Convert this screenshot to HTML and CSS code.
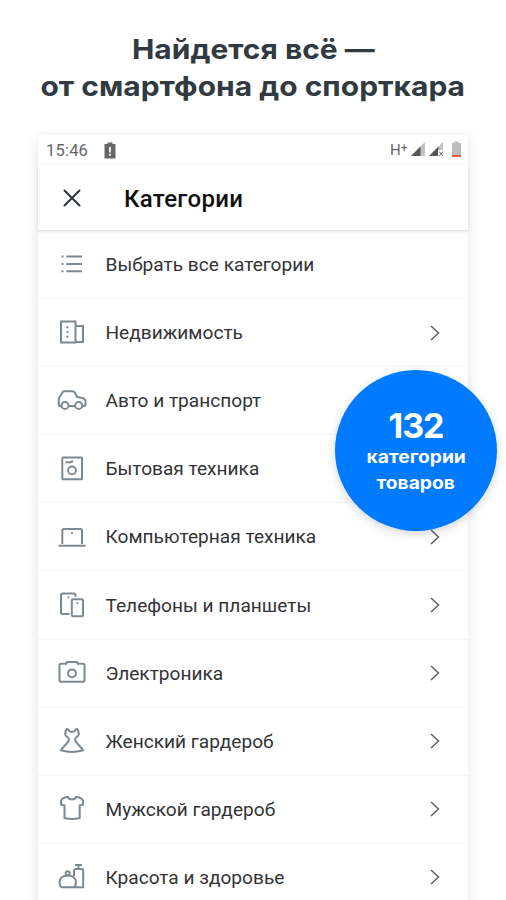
FILE: index.html
```html
<!DOCTYPE html>
<html lang="ru">
<head>
<meta charset="utf-8">
<title>Категории</title>
<link rel="stylesheet" href="styles.css">
</head>
<body>
<h1 class="headline"><span class="line">Найдется всё —</span><span class="line">от смартфона до спорткара</span></h1>
<main class="phone">
  <div class="status">
    <span class="time">15:46</span>
    <svg class="alert" width="12" height="17" viewBox="0 0 12 17"><path d="M.5 2H3.5V.5H8.500V2H11.500V16.500H.5z" fill="#666"/><path d="M6 5v5.500M6 11.700v2" stroke="#fff" stroke-width="1.700"/></svg>
    <span class="net">H<sup>+</sup></span>
    <svg class="signals" width="72" height="18" viewBox="0 0 72 18">
      <path d="M14 1V15H0z" fill="#c2c2c2"/><path d="M9.500 5.500V15H0z" fill="#555"/>
      <path d="M32 1V9H27V15H18z" fill="#c2c2c2"/><path d="M27.500 5.500V15H18z" fill="#555"/><path d="M27 9h6v7h-6z" fill="#fff"/><path d="M28 10.500l4 4.500M32 10.500l-4 4.500" stroke="#666" stroke-width="1"/>
      <path d="M41 2h2.500V.5h4V2H50v14h-9z" fill="#bdbdbd"/><path d="M41 14h9v2h-9z" fill="#ee5b45"/>
    </svg>
  </div>
  <header class="bar">
    <svg class="close" width="18" height="18" viewBox="0 0 18 18"><path d="M1.500 1.500l15 15M16.500 1.500l-15 15"/></svg>
    <h2>Категории</h2>
  </header>
  <ul class="list">
    <li><svg class="icon" viewBox="0 0 36 36"><path d="M12.300 9.500H28M12.300 17H28M12.300 24.300H28M7.500 9.500h2M7.500 17h2M7.500 24.300h2"/></svg><span>Выбрать все категории</span></li>
    <li><svg class="icon" viewBox="0 0 36 36"><path d="M7 6.500H21.500V27.500H7zM21.500 11H29V27H21.500M12.400 12.300h2M12.400 17h2M12.400 21.800h2"/></svg><span>Недвижимость</span><svg class="chev" viewBox="0 0 12 18"><path d="M2 2l7.500 7L2 16"/></svg></li>
    <li><svg class="icon" viewBox="0 0 36 36"><path d="M7.500 23H6Q4.800 23 4.800 21.500V15.500L8.500 9.300Q9.200 8.300 10.300 8.300H18.500Q20 8.300 20.800 9.500L23 13.800L29 15.300Q31.500 16 31.500 18.500V21.500Q31.500 23 30 23H28.200M14.500 23H21.200"/><circle cx="11" cy="22.400" r="3.500"/><circle cx="24.700" cy="22.400" r="3.500"/></svg><span>Авто и транспорт</span></li>
    <li><svg class="icon" viewBox="0 0 36 36"><rect x="8.300" y="6.500" width="19.700" height="21.700" rx=".6"/><circle cx="18" cy="19.400" r="3.900"/><path d="M11.500 11.300H16Q18.400 11.300 18.400 9.500"/></svg><span>Бытовая техника</span></li>
    <li><svg class="icon" viewBox="0 0 36 36"><path d="M8.300 25V11.500Q8.300 10 9.800 10H26.500Q28 10 28 11.500V25M4.500 26.700H31.700M17.200 14h1.600"/></svg><span>Компьютерная техника</span><svg class="chev" viewBox="0 0 12 18"><path d="M2 2l7.500 7L2 16"/></svg></li>
    <li><svg class="icon" viewBox="0 0 36 36"><path d="M15.500 27H8.500Q7 27 7 25.500V8Q7 6.500 8.500 6.500H20Q21.500 6.500 21.500 8V9.700M13.500 10.300h1.700M22.500 16.300h1.700"/><rect x="17.800" y="12.300" width="11.200" height="17" rx="1.200"/></svg><span>Телефоны и планшеты</span><svg class="chev" viewBox="0 0 12 18"><path d="M2 2l7.500 7L2 16"/></svg></li>
    <li><svg class="icon" viewBox="0 0 36 36"><path d="M7 8.800H12.200L13 7H23L23.800 8.800H29Q30.500 8.800 30.500 10.300V25.300Q30.500 26.800 29 26.800H7Q5.500 26.800 5.500 25.300V10.300Q5.500 8.800 7 8.800z"/><circle cx="18" cy="18.300" r="3.900"/></svg><span>Электроника</span><svg class="chev" viewBox="0 0 12 18"><path d="M2 2l7.500 7L2 16"/></svg></li>
    <li><svg class="icon" viewBox="0 0 36 36"><path d="M12.800 6Q14.500 6 15.200 7.800Q16 9 18 9Q20 9 20.800 7.800Q21.500 6 23.200 6Q25.500 9.500 24.600 11.800C23.800 13.800 21 14.500 21 16.500C21.500 20 27 23.500 29 27.300Q18 30.800 7 27.300C9 23.500 14.500 20 15 16.500C15 14.500 12.200 13.800 11.400 11.800Q10.500 9.500 12.800 6z"/></svg><span>Женский гардероб</span><svg class="chev" viewBox="0 0 12 18"><path d="M2 2l7.500 7L2 16"/></svg></li>
    <li><svg class="icon" viewBox="0 0 36 36"><path d="M14 6Q14.800 8.500 18 8.500Q21.200 8.500 22 6Q27 6 29 9.500V13.500L25.700 14.500V27Q18 29 10.500 27V14.500L7 13.500V9.500Q9 6 14 6z"/></svg><span>Мужской гардероб</span><svg class="chev" viewBox="0 0 12 18"><path d="M2 2l7.500 7L2 16"/></svg></li>
    <li><svg class="icon" viewBox="0 0 36 36"><path d="M7.500 28.200Q5.500 26.500 5.500 23.500C5.500 19 9 16.500 13.700 16.500C18.500 16.500 22 19 22 23.500Q22 26.500 20 28.200zM20 17V12Q20 10 22 10H27.200Q29.200 10 29.200 12V28.200H20M24.500 10V6M21 6H28"/><circle cx="13.700" cy="14.200" r="2"/></svg><span>Красота и здоровье</span><svg class="chev" viewBox="0 0 12 18"><path d="M2 2l7.500 7L2 16"/></svg></li>
  </ul>
  <aside class="badge"><strong>132</strong><span>категории</span><span>товаров</span></aside>
</main>
</body>
</html>
```
FILE: styles.css
```css
* { box-sizing: border-box; }
html, body { height: 900px; overflow: hidden; }
body { margin: 0; background: #fff; color: #222; font-family: Roboto, "Noto Sans", sans-serif; }
h1, h2, ul { margin: 0; padding: 0; font-weight: normal; }
.headline { height: 135px; padding-top: 31px; display: flex; flex-direction: column; align-items: center; color: #303a40; font: 700 27.5px/37px Inter, "Open Sans", sans-serif; white-space: nowrap; }
.line { transform: scaleX(1.09); }
.phone { position: relative; width: 430px; height: 780px; margin-left: 38px; background: #fff; box-shadow: 0 3px 11px rgba(40, 50, 80, .13); }
.status { height: 30px; display: flex; align-items: center; padding: 0 0 0 8px; color: #666; }
.time { width: 58px; font-size: 16.500px; letter-spacing: .2px; }
.net { margin-left: auto; font-size: 15px; width: 21px; line-height: 16px; }
.net sup { font-size: 12px; line-height: 0; vertical-align: 3px; }
.signals { margin-right: -15px; }
.bar { height: 66px; display: flex; align-items: center; padding: 0 0 0 25px; border-bottom: 1px solid #e4e5e7; box-shadow: 0 1px 3px rgba(0, 0, 0, .1); }
.close { fill: none; stroke: #2b333a; stroke-width: 2; stroke-linecap: round; }
.bar h2 { margin-left: 43px; padding-top: 2px; color: #111; font-size: 24px; font-weight: 500; letter-spacing: .3px; }
.list { list-style: none; }
.list li { height: 68.1px; display: flex; align-items: center; padding: 0 27px 0 16px; border-bottom: 1px solid #f4f4f6; font-size: 19.1px; color: #333336; }
.icon { width: 36px; height: 36px; margin-right: 15.500px; fill: none; stroke: #7d8991; stroke-width: 2; }
.chev { width: 12px; height: 18px; margin-left: auto; fill: none; stroke: #59626a; stroke-width: 1.500; }
.badge { position: absolute; left: 297px; top: 235px; width: 162px; height: 161px; border-radius: 50%; background: #007aff; color: #fff; display: flex; flex-direction: column; align-items: center; padding-top: 37px; font: 700 17.5px/26px Inter, "Open Sans", sans-serif; box-shadow: 0 3px 10px rgba(40, 50, 80, .2); }
.badge span { transform: scaleX(1.1); }
.badge strong { font-size: 34px; font-weight: 700; line-height: 37px; letter-spacing: -1px; }
```
